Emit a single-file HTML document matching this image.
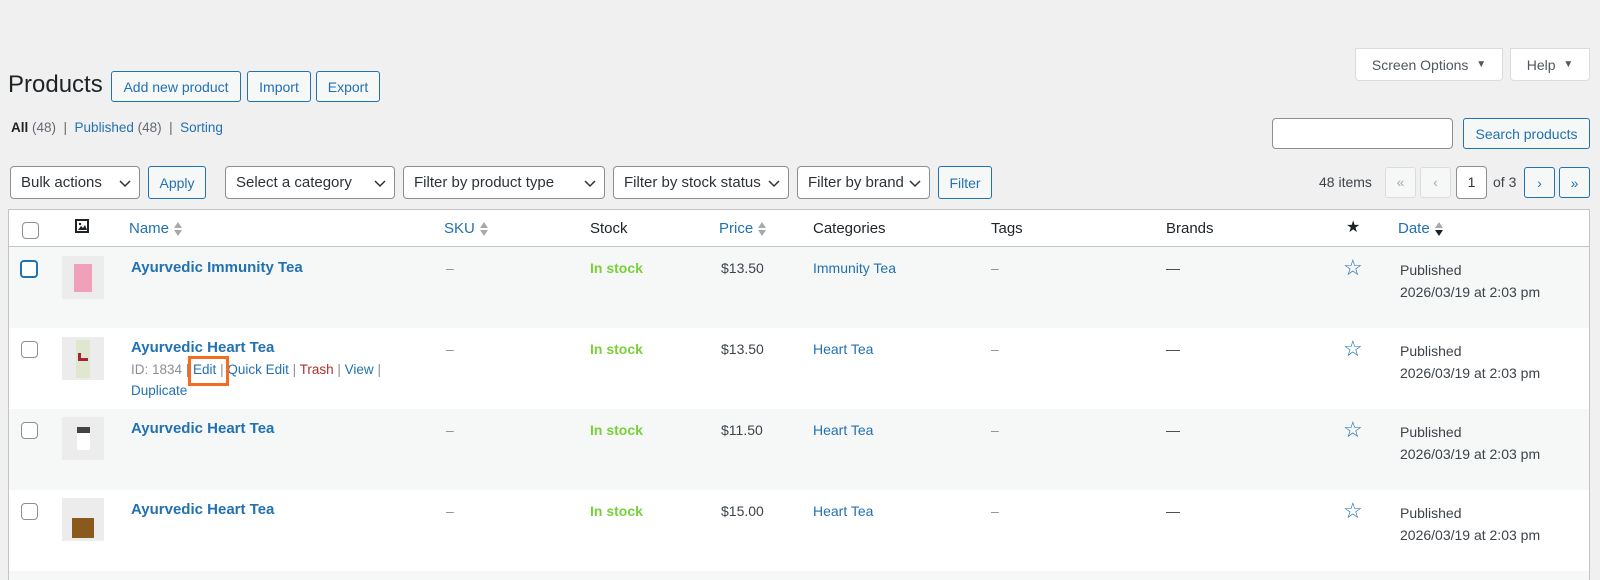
<!DOCTYPE html>
<html><head><meta charset="utf-8"><style>
*{box-sizing:border-box;margin:0;padding:0}
html,body{width:1600px;height:580px;overflow:hidden}
body{background:#f0f0f1;font-family:"Liberation Sans",sans-serif;font-size:14px;color:#3c434a;position:relative}
.a{position:absolute;white-space:nowrap}
.btn{position:absolute;border:1px solid #2271b1;color:#2271b1;background:#f6f7f7;border-radius:3px;display:flex;align-items:center;justify-content:center;font-size:14px}
.sel{position:absolute;border:1px solid #8c8f94;background:#fff;border-radius:4px;display:flex;align-items:center;padding-left:10px;font-size:15px;color:#2c3338}
.sel svg{position:absolute;right:8px;top:50%;margin-top:-5px}
.link{color:#2271b1}
.row{position:absolute;left:9px;width:1580px;height:81px}
.cb{position:absolute;width:17px;height:17px;border:1px solid #8c8f94;border-radius:4px;background:#fff}
.name{font-weight:bold;color:#2271b1;font-size:15px}
.green{font-weight:bold;color:#7ad03a}
.thumb{position:absolute;width:42px;height:43px;background:#ececec}
.srt{display:inline-block;vertical-align:middle;margin-left:4px}
</style></head><body>
<div class="a" style="left:1355px;top:48px;width:148px;height:33px;background:#fff;border:1px solid #dcdcde;border-radius:0 0 4px 4px;display:flex;align-items:center;justify-content:center;color:#50575e;font-size:14px">Screen Options&nbsp;&nbsp;<span style="font-size:10px">▼</span></div>
<div class="a" style="left:1510px;top:48px;width:80px;height:33px;background:#fff;border:1px solid #dcdcde;border-radius:0 0 4px 4px;display:flex;align-items:center;justify-content:center;color:#50575e;font-size:14px">Help&nbsp;&nbsp;<span style="font-size:10px">▼</span></div>

<div class="a" style="left:8px;top:70px;font-size:24px;color:#1d2327;line-height:30px">Products</div>
<div class="btn" style="left:111px;top:71px;width:130px;height:31px">Add new product</div>
<div class="btn" style="left:247px;top:71px;width:64px;height:31px">Import</div>
<div class="btn" style="left:316px;top:71px;width:64px;height:31px">Export</div>

<div class="a" style="left:11px;top:120px;font-size:13.5px;color:#646970"><b style="color:#1d2327">All</b> (48) &nbsp;| &nbsp;<span class="link">Published</span> (48) &nbsp;| &nbsp;<span class="link">Sorting</span></div>

<div class="a" style="left:1272px;top:118px;width:181px;height:31px;background:#fff;border:1px solid #8c8f94;border-radius:4px"></div>
<div class="btn" style="left:1463px;top:118px;width:127px;height:31px">Search products</div>

<div class="sel" style="left:10px;top:166px;width:130px;height:33px">Bulk actions<svg width="12" height="10" viewBox="0 0 12 10"><path d="M1 3l5 5 5-5" fill="none" stroke="#2c3338" stroke-width="1.5"/></svg></div>
<div class="btn" style="left:148px;top:166px;width:58px;height:33px">Apply</div>
<div class="sel" style="left:225px;top:166px;width:170px;height:33px">Select a category<svg width="12" height="10" viewBox="0 0 12 10"><path d="M1 3l5 5 5-5" fill="none" stroke="#2c3338" stroke-width="1.5"/></svg></div>
<div class="sel" style="left:403px;top:166px;width:202px;height:33px">Filter by product type<svg width="12" height="10" viewBox="0 0 12 10"><path d="M1 3l5 5 5-5" fill="none" stroke="#2c3338" stroke-width="1.5"/></svg></div>
<div class="sel" style="left:613px;top:166px;width:176px;height:33px">Filter by stock status<svg width="12" height="10" viewBox="0 0 12 10"><path d="M1 3l5 5 5-5" fill="none" stroke="#2c3338" stroke-width="1.5"/></svg></div>
<div class="sel" style="left:797px;top:166px;width:133px;height:33px">Filter by brand<svg width="12" height="10" viewBox="0 0 12 10"><path d="M1 3l5 5 5-5" fill="none" stroke="#2c3338" stroke-width="1.5"/></svg></div>
<div class="btn" style="left:938px;top:166px;width:54px;height:33px">Filter</div>

<div class="a" style="left:1319px;top:174px;font-size:14px">48 items</div>
<div class="a" style="left:1385px;top:167px;width:31px;height:31px;border:1px solid #dcdcde;background:#f6f7f7;border-radius:3px;color:#a7aaad;text-align:center;line-height:29px">«</div>
<div class="a" style="left:1420px;top:167px;width:31px;height:31px;border:1px solid #dcdcde;background:#f6f7f7;border-radius:3px;color:#a7aaad;text-align:center;line-height:29px">‹</div>
<div class="a" style="left:1456px;top:166px;width:31px;height:33px;border:1px solid #8c8f94;background:#fff;border-radius:4px;color:#2c3338;text-align:center;line-height:31px">1</div>
<div class="a" style="left:1493px;top:174px">of 3</div>
<div class="btn" style="left:1524px;top:167px;width:31px;height:31px;background:#f6f7f7">›</div>
<div class="btn" style="left:1559px;top:167px;width:31px;height:31px;background:#f6f7f7">»</div>

<div class="a" style="left:8px;top:209px;width:1582px;height:371px;background:#fff;border:1px solid #c3c4c7;border-bottom:none"></div>
<div class="a" style="left:9px;top:246px;width:1580px;height:1px;background:#c3c4c7"></div>
<div class="cb" style="left:22px;top:222px"></div>
<svg class="a" style="left:75px;top:219px" width="14" height="14" viewBox="0 0 14 14"><rect x="1" y="1" width="12" height="12" fill="none" stroke="#1d2327" stroke-width="2"/><path d="M3 11l3-4 2 2 2-3 2 5z" fill="#1d2327"/><circle cx="5" cy="5" r="1.2" fill="#1d2327"/></svg>
<div class="a link" style="left:129px;top:220px;font-size:15px">Name<svg class="srt" width="10" height="16" viewBox="0 0 10 16"><path d="M5 1l4 6H1z M5 15l4-6H1z" fill="#a7aaad"/></svg></div>
<div class="a link" style="left:444px;top:220px;font-size:15px">SKU<svg class="srt" width="10" height="16" viewBox="0 0 10 16"><path d="M5 1l4 6H1z M5 15l4-6H1z" fill="#a7aaad"/></svg></div>
<div class="a" style="left:590px;top:220px;font-size:15px;color:#1d2327">Stock</div>
<div class="a link" style="left:719px;top:220px;font-size:15px">Price<svg class="srt" width="10" height="16" viewBox="0 0 10 16"><path d="M5 1l4 6H1z M5 15l4-6H1z" fill="#a7aaad"/></svg></div>
<div class="a" style="left:813px;top:220px;font-size:15px;color:#1d2327">Categories</div>
<div class="a" style="left:991px;top:220px;font-size:15px;color:#1d2327">Tags</div>
<div class="a" style="left:1166px;top:220px;font-size:15px;color:#1d2327">Brands</div>
<div class="a" style="left:1346px;top:217px;font-size:16px;color:#1d2327">★</div>
<div class="a link" style="left:1398px;top:220px;font-size:15px">Date<svg class="srt" width="10" height="16" viewBox="0 0 10 16"><path d="M5 1l4 6H1z" fill="#a7aaad"/><path d="M5 15l4-6H1z" fill="#1d2327"/></svg></div>

<div class="row" style="top:247px;background:#f6f7f7"></div>
<div class="row" style="top:328px;background:#fff"></div>
<div class="row" style="top:409px;background:#f6f7f7"></div>
<div class="row" style="top:490px;background:#fff"></div>
<div class="row" style="top:571px;height:9px;background:#f6f7f7"></div>

<div class="cb" style="left:20px;top:260px;width:18px;height:18px;border:2px solid #2271b1"></div>
<div class="thumb" style="left:62px;top:256px"><div style="position:absolute;left:12px;top:8px;width:18px;height:28px;background:#f0a0b8"></div></div>
<div class="a name" style="left:131px;top:259px">Ayurvedic Immunity Tea</div>
<div class="a" style="left:446px;top:260px;color:#8c8f94">–</div>
<div class="a green" style="left:590px;top:260px">In stock</div>
<div class="a" style="left:721px;top:260px">$13.50</div>
<div class="a link" style="left:813px;top:260px">Immunity Tea</div>
<div class="a" style="left:991px;top:260px;color:#8c8f94">–</div>
<div class="a" style="left:1166px;top:260px">—</div>
<div class="a" style="left:1343px;top:255px;font-size:22px;color:#2271b1">☆</div>
<div class="a" style="left:1400px;top:259px;line-height:22px">Published<br>2026/03/19 at 2:03 pm</div>

<div class="cb" style="left:21px;top:341px"></div>
<div class="thumb" style="left:62px;top:337px"><div style="position:absolute;left:14px;top:3px;width:14px;height:38px;background:#dfe8cf"></div><div style="position:absolute;left:16px;top:16px;width:10px;height:8px;border-left:3px solid #a8203a;border-bottom:3px solid #a8203a"></div></div>
<div class="a name" style="left:131px;top:339px">Ayurvedic Heart Tea</div>
<div class="a" style="left:131px;top:362px;font-size:13.5px;color:#8c8f94">ID: 1834 | <span class="link">Edit</span> | <span class="link">Quick Edit</span> | <span style="color:#b32d2e">Trash</span> | <span class="link">View</span> |</div>
<div class="a link" style="left:131px;top:383px;font-size:13.5px">Duplicate</div>
<div class="a" style="left:188px;top:356px;width:41px;height:30px;border:3px solid #f26d21"></div>
<div class="a" style="left:446px;top:341px;color:#8c8f94">–</div>
<div class="a green" style="left:590px;top:341px">In stock</div>
<div class="a" style="left:721px;top:341px">$13.50</div>
<div class="a link" style="left:813px;top:341px">Heart Tea</div>
<div class="a" style="left:991px;top:341px;color:#8c8f94">–</div>
<div class="a" style="left:1166px;top:341px">—</div>
<div class="a" style="left:1343px;top:336px;font-size:22px;color:#2271b1">☆</div>
<div class="a" style="left:1400px;top:340px;line-height:22px">Published<br>2026/03/19 at 2:03 pm</div>

<div class="cb" style="left:21px;top:422px"></div>
<div class="thumb" style="left:62px;top:417px"><div style="position:absolute;left:15px;top:10px;width:13px;height:23px;background:#fff;border-top:6px solid #444"></div></div>
<div class="a name" style="left:131px;top:420px">Ayurvedic Heart Tea</div>
<div class="a" style="left:446px;top:422px;color:#8c8f94">–</div>
<div class="a green" style="left:590px;top:422px">In stock</div>
<div class="a" style="left:721px;top:422px">$11.50</div>
<div class="a link" style="left:813px;top:422px">Heart Tea</div>
<div class="a" style="left:991px;top:422px;color:#8c8f94">–</div>
<div class="a" style="left:1166px;top:422px">—</div>
<div class="a" style="left:1343px;top:417px;font-size:22px;color:#2271b1">☆</div>
<div class="a" style="left:1400px;top:421px;line-height:22px">Published<br>2026/03/19 at 2:03 pm</div>

<div class="cb" style="left:21px;top:503px"></div>
<div class="thumb" style="left:62px;top:498px"><div style="position:absolute;left:10px;top:20px;width:22px;height:20px;background:#8a5a1c"></div></div>
<div class="a name" style="left:131px;top:501px">Ayurvedic Heart Tea</div>
<div class="a" style="left:446px;top:503px;color:#8c8f94">–</div>
<div class="a green" style="left:590px;top:503px">In stock</div>
<div class="a" style="left:721px;top:503px">$15.00</div>
<div class="a link" style="left:813px;top:503px">Heart Tea</div>
<div class="a" style="left:991px;top:503px;color:#8c8f94">–</div>
<div class="a" style="left:1166px;top:503px">—</div>
<div class="a" style="left:1343px;top:498px;font-size:22px;color:#2271b1">☆</div>
<div class="a" style="left:1400px;top:502px;line-height:22px">Published<br>2026/03/19 at 2:03 pm</div>
</body></html>
